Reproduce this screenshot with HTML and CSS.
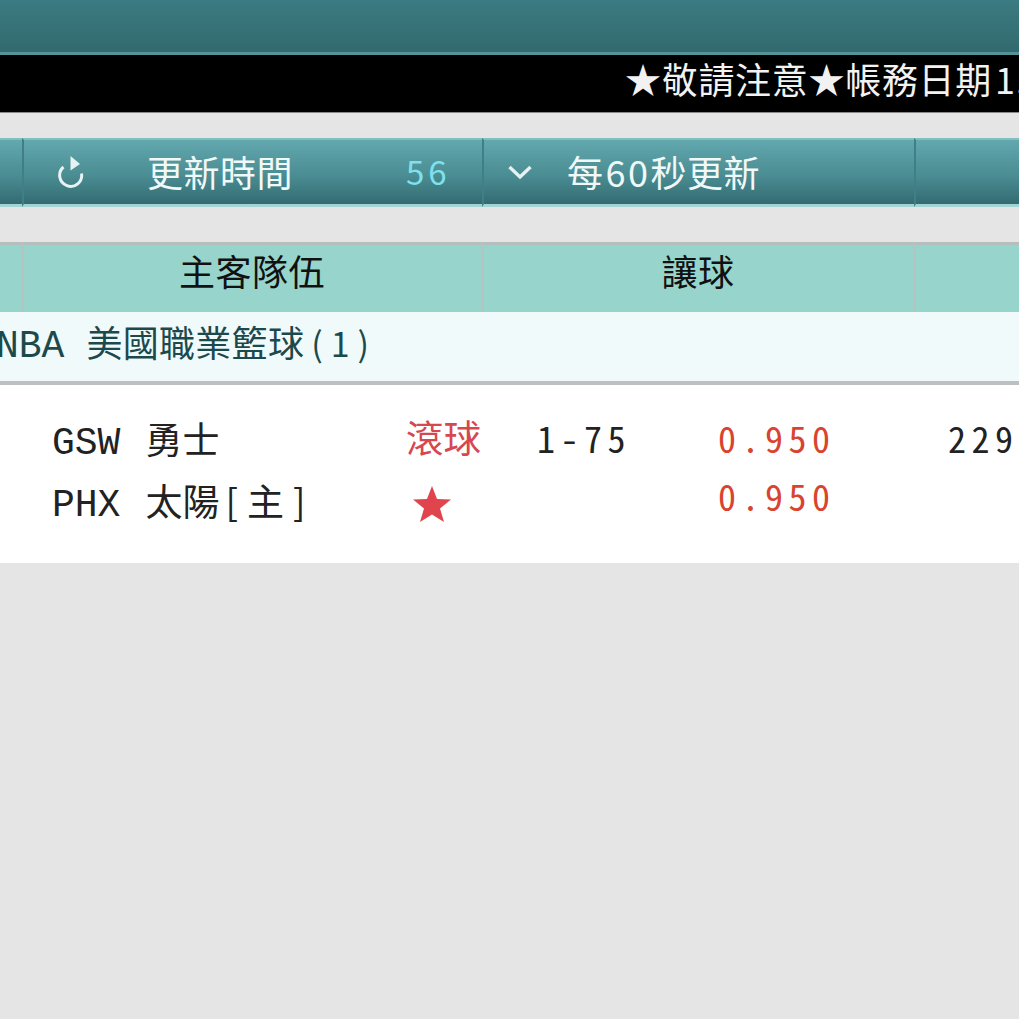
FILE: index.html
```html
<!DOCTYPE html>
<html lang="zh-Hant">
<head>
<meta charset="utf-8">
<title>賽事</title>
<link rel="stylesheet" href="styles.css">
</head>
<body>
<div class="topbar"></div>
<div class="notice"><span class="notice-text">★敬請注意★帳務日期<span class="notice-num">1.</span></span></div>
<div class="toolbar cols">
  <div class="tool"></div>
  <div class="tool refresh">
    <svg class="ico-refresh" width="30" height="32" viewBox="0 0 30 32" aria-hidden="true"><path d="M7.500 11A11 11 0 1 0 25.500 17.500" fill="none" stroke="#e6f2f3" stroke-width="3"/><path d="M14.500 0 L24 8 L14.500 14.500 Z" fill="#e6f2f3"/></svg>
    <span class="tool-label">更新時間</span>
    <span class="count">56</span>
  </div>
  <div class="tool interval">
    <svg class="ico-chevron" width="24" height="16" viewBox="0 0 24 16" aria-hidden="true"><path d="M1.500 3 L12 13 L22.500 3" fill="none" stroke="#e6f2f3" stroke-width="3.400"/></svg>
    <span class="tool-label">每<span class="tool-num">60</span>秒更新</span>
  </div>
  <div class="tool"></div>
</div>
<div class="thead cols">
  <div class="th"></div>
  <div class="th">主客隊伍</div>
  <div class="th">讓球</div>
  <div class="th"></div>
</div>
<div class="league"><span class="code">NBA</span><span class="league-name">美國職業籃球</span><span class="league-count">(1)</span></div>
<div class="match cols">
  <div></div>
  <div class="teams">
    <div class="team-list">
      <div class="team"><span class="code">GSW</span><span class="team-name">勇士</span></div>
      <div class="team"><span class="code">PHX</span><span class="team-name">太陽<span class="home">[主]</span></span></div>
    </div>
    <div class="status">
      <span class="live">滾球</span>
      <svg class="fav" width="40" height="38" viewBox="0 0 40 38" aria-hidden="true"><path d="M20 1 L25 14 L39 14.500 L28 23.500 L32 37 L20 29.500 L8 37 L12 23.500 L1 14.500 L15 14 Z" fill="#e0454d"/></svg>
    </div>
  </div>
  <div class="handicap">
    <span class="line">1-75</span>
    <div class="odds"><span>0.950</span><span>0.950</span></div>
  </div>
  <div class="total">229</div>
</div>
</body>
</html>
```
FILE: styles.css
```css
html, body {
  margin: 0;
  height: 100%;
  overflow: hidden;
  background: #e5e5e5;
}
body {
  font-family: "Noto Sans CJK TC", "Noto Sans", sans-serif;
}
.cols {
  display: grid;
  grid-template-columns: 22px 460px 432px 1fr;
}
.topbar {
  height: 52px;
  background: linear-gradient(#3b7b81, #326a6e);
  border-bottom: 3px solid #55929a;
}
.notice {
  height: 57px;
  background: #000;
  border-bottom: 1px solid #8a8a8a;
  padding-left: 625px;
  color: #f2f2f2;
  font-size: 36px;
  line-height: 46px;
  white-space: nowrap;
  overflow: hidden;
}
.notice-text { letter-spacing: 0.7px; }
.notice-num { margin-left: 3px; letter-spacing: 1px; }
.toolbar {
  margin-top: 25px;
  height: 69px;
}
.tool {
  display: flex;
  align-items: center;
  box-sizing: border-box;
  height: 69px;
  padding-bottom: 3px;
  border-top: 2px solid #7fc0c0;
  border-bottom: 3px solid #a3d6d3;
  border-left: 2px solid #3f7f85;
  background: linear-gradient(#62a8ae, #4a8d93 55%, #346b72);
  color: #f0f8f8;
  font-size: 36px;
  white-space: nowrap;
}
.tool:first-child { border-left: 0; }
.refresh { padding-left: 32px; }
.interval { padding-left: 24px; }
.ico-refresh { flex: none; margin-top: 3px; }
.ico-chevron { flex: none; margin-top: 3px; }
.tool-label { letter-spacing: 0.5px; }
.tool-num { letter-spacing: 2.5px; margin-left: 2px; }
.refresh .tool-label { margin-left: 61px; }
.interval .tool-label { margin-left: 35px; }
.count {
  margin-left: 113px;
  color: #7fe0ee;
  font-size: 33px;
  letter-spacing: 4px;
}
.thead { margin-top: 35px; }
.th {
  box-sizing: border-box;
  height: 70px;
  margin-left: -1px;
  padding-right: 2px;
  border-top: 3px solid #b5bfbd;
  border-left: 3px solid #b5c4c1;
  background: #96d4cc;
  color: #111;
  font-size: 36px;
  line-height: 50px;
  letter-spacing: 0.5px;
  text-align: center;
}
.th:first-child { border-left: 0; margin-left: 0; }
.league {
  height: 69px;
  background: #f1fafb;
  border-bottom: 4px solid #bcc0c0;
  color: #1c4a4c;
  font-size: 36px;
  line-height: 58px;
  white-space: nowrap;
  margin-left: -4px;
}
.code { font-family: "Liberation Mono", monospace; font-size: 38px; font-weight: 400; }
.league-name { margin-left: 22px; letter-spacing: 0.3px; }
.league-count { letter-spacing: 8px; margin-left: 7px; font-size: 34px; }
.match {
  height: 178px;
  background: #fff;
  color: #222;
}
.teams {
  display: flex;
  padding-left: 30px;
}
.team-list {
  display: flex;
  flex-direction: column;
  padding-top: 26px;
  width: 354px;
}
.team { height: 62px; line-height: 54px; font-size: 37px; white-space: nowrap; }
.team-name { margin-left: 25px; }
.home { letter-spacing: 9px; margin-left: 6px; }
.status {
  display: flex;
  flex-direction: column;
  padding-top: 24px;
}
.live { color: #d6474f; font-size: 37.5px; line-height: 54px; }
.fav { margin: 22px 0 0 6px; }
.handicap {
  display: flex;
  font-family: "Noto Sans Mono CJK TC", "DejaVu Sans Mono", monospace;
  font-size: 36px;
  letter-spacing: 5.5px;
  padding: 26px 0 0 55px;
}
.line { width: 181px; line-height: 52px; }
.odds {
  display: flex;
  flex-direction: column;
  color: #d8442f;
  line-height: 58px;
  margin-top: -3px;
}
.total {
  font-family: "Noto Sans Mono CJK TC", "DejaVu Sans Mono", monospace;
  font-size: 36px;
  letter-spacing: 5.5px;
  padding: 26px 0 0 34px;
  line-height: 52px;
}
```
